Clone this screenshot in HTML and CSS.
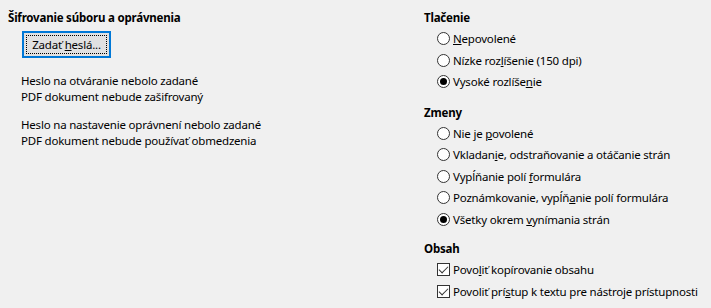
FILE: index.html
```html
<!DOCTYPE html>
<html lang="sk">
<head>
  <meta charset="UTF-8" />
  <title>Zabezpečenie PDF</title>
  <link rel="stylesheet" href="styles.css">
</head>
<body>
  <div class="dialog">
    <div class="col col-left">
      <div class="section-title">Šifrovanie súboru a oprávnenia</div>
      <button class="btn"><span class="focus">Zadať <u>h</u>eslá...</span></button>
      <p class="info">Heslo na otváranie nebolo zadané<br>PDF dokument nebude zašifrovaný</p>
      <p class="info">Heslo na nastavenie oprávnení nebolo zadané<br>PDF dokument nebude používať obmedzenia</p>
    </div>

    <div class="col col-right">
      <div class="group">
        <div class="section-title">Tlačenie</div>
        <label class="opt"><span class="radio"></span><span><u>N</u>epovolené</span></label>
        <label class="opt"><span class="radio"></span><span>Nízke roz<u>l</u>íšenie (150 dpi)</span></label>
        <label class="opt"><span class="radio on"></span><span>Vysoké rozlíše<u>n</u>ie</span></label>
      </div>

      <div class="group">
        <div class="section-title">Zmeny</div>
        <label class="opt"><span class="radio"></span><span>Nie je <u>p</u>ovolené</span></label>
        <label class="opt"><span class="radio"></span><span>Vkladan<u>i</u>e, odstraňovanie a otáčanie strán</span></label>
        <label class="opt"><span class="radio"></span><span>Vypĺňanie polí <u>f</u>ormulára</span></label>
        <label class="opt"><span class="radio"></span><span>Poznámkovanie, vypĺň<u>a</u>nie polí formulára</span></label>
        <label class="opt"><span class="radio on"></span><span>Všetky okrem <u>v</u>ynímania strán</span></label>
      </div>

      <div class="group group-last">
        <div class="section-title">Obsah</div>
        <label class="opt"><span class="check"></span><span>Povo<u>l</u>iť kopírovanie obsahu</span></label>
        <label class="opt"><span class="check"></span><span>Povoliť prí<u>s</u>tup k textu pre nástroje prístupnosti</span></label>
      </div>
    </div>
  </div>
</body>
</html>
```

FILE: styles.css
```css
body {
  margin: 0;
  background: #f0f0f0;
  font-family: "Noto Sans", "Open Sans", sans-serif;
  font-size: 11.5px;
  letter-spacing: -0.2px;
  color: #000;
}

.dialog {
  display: flex;
  padding: 8px 0 0 8px;
}

.col-left {
  width: 416px;
}

.section-title {
  font-weight: bold;
  line-height: 20px;
}

.btn {
  display: block;
  margin: 3px 0 0 14px;
  width: 89px;
  height: 27px;
  padding: 2px;
  background: #e1e1e1;
  border: 2px solid #0078d7;
  font: inherit;
  letter-spacing: inherit;
  color: #000;
}

.btn .focus {
  display: block;
  height: 100%;
  box-sizing: border-box;
  border: 1px dotted #000;
  line-height: 17px;
}

.info {
  margin: 15px 0 0 13px;
  line-height: 16px;
}

.info + .info {
  margin-top: 12px;
}

.group + .group {
  margin-top: 10px;
}

.group-last {
  margin-top: 9px !important;
}

.opt {
  display: flex;
  align-items: center;
  height: 21.5px;
  padding-left: 13px;
  white-space: nowrap;
}

.radio,
.check {
  flex: none;
  width: 13px;
  height: 13px;
  box-sizing: border-box;
  margin-right: 3px;
  background: #fff;
  border: 1px solid #333;
  position: relative;
}

.radio {
  border-radius: 50%;
}

.radio.on::after {
  content: "";
  position: absolute;
  left: 2px;
  top: 2px;
  width: 7px;
  height: 7px;
  border-radius: 50%;
  background: #000;
}

.check::after {
  content: "";
  position: absolute;
  left: 3px;
  top: 0px;
  width: 4px;
  height: 8px;
  border: solid #333;
  border-width: 0 1px 1px 0;
  transform: rotate(45deg);
}
```
